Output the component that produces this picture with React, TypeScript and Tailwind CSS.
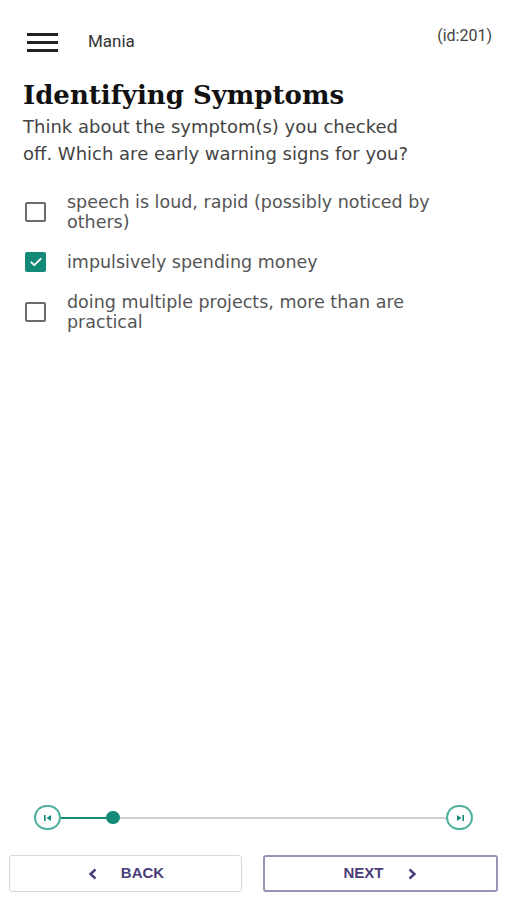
import React from "react";

const body = { fontFamily: '"DejaVu Sans", sans-serif' };

function Box({ checked }: { checked: boolean }) {
  if (checked) {
    return (
      <div className="w-[21px] h-[20px] rounded-[2px] bg-[#138a78] flex items-center justify-center shrink-0">
        <svg width="14" height="14" viewBox="0 0 24 24" fill="none" stroke="white" strokeWidth="3.2" strokeLinecap="round" strokeLinejoin="round">
          <path d="M4 12.5l5 5L20 6.5" />
        </svg>
      </div>
    );
  }
  return <div className="w-[21px] h-[20px] rounded-[2px] border-2 border-[#6b6b6b] shrink-0" />;
}

function Option({ checked, text }: { checked: boolean; text: string }) {
  return (
    <div className="flex items-center">
      <div className="w-[44px] pl-[2px] flex shrink-0">
        <Box checked={checked} />
      </div>
      <div className="text-[17.5px] leading-[20px] text-[#555] pr-[40px]" style={body}>
        {text}
      </div>
    </div>
  );
}

export default function App() {
  return (
    <div className="w-[507px] h-[900px] bg-white flex flex-col">
      <div className="flex items-start pl-[27px] pr-[15px] pt-[24px]">
        <div className="flex flex-col gap-[5px] pt-[9px]">
          <div className="w-[31px] h-[3px] bg-[#222]" />
          <div className="w-[31px] h-[3px] bg-[#222]" />
          <div className="w-[31px] h-[3px] bg-[#222]" />
        </div>
        <div className="ml-[30px] pt-[5px] text-[17px] text-[#333]" style={{ fontFamily: '"Roboto", sans-serif' }}>Mania</div>
        <div className="ml-auto text-[16px] text-[#444]" style={{ fontFamily: '"Roboto", sans-serif' }}>(id:201)</div>
      </div>
      <div className="px-[23px] pt-[24px]">
        <h1 className="text-[26px] leading-[32px] font-bold text-[#111]" style={{ fontFamily: '"DejaVu Serif", serif' }}>
          Identifying Symptoms
        </h1>
        <p className="mt-[2px] w-[400px] text-[18px] leading-[27px] text-[#444]" style={body}>
          Think about the symptom(s) you checked off. Which are early warning signs for you?
        </p>
        <div className="mt-[25px] flex flex-col gap-[20px]">
          <Option checked={false} text="speech is loud, rapid (possibly noticed by others)" />
          <Option checked={true} text="impulsively spending money" />
          <Option checked={false} text="doing multiple projects, more than are practical" />
        </div>
      </div>
      <div className="flex-1" />
      <div className="px-[34px] flex items-center">
        <div className="w-[27px] h-[25px] rounded-full border-2 border-[#4fb09c] flex items-center justify-center shrink-0">
          <svg width="10" height="8" viewBox="0 0 10 8"><rect x="1" y="1" width="1.6" height="6" fill="#138a78" /><path d="M8 1L3.5 4L8 7z" fill="#138a78" /></svg>
        </div>
        <div className="w-[47px] h-[2px] bg-[#138a78]" />
        <div className="w-[14px] h-[13px] rounded-full bg-[#138a78] -mx-[2px] relative z-10" />
        <div className="flex-1 h-[2px] bg-[#cfcfcf]" />
        <div className="w-[27px] h-[25px] rounded-full border-2 border-[#4fb09c] flex items-center justify-center shrink-0">
          <svg width="10" height="8" viewBox="0 0 10 8"><path d="M2 1L6.5 4L2 7z" fill="#138a78" /><rect x="7.4" y="1" width="1.6" height="6" fill="#138a78" /></svg>
        </div>
      </div>
      <div className="flex gap-[21px] px-[9px] pt-[25px] pb-[8px]" style={{ fontFamily: '"Liberation Sans", sans-serif' }}>
        <button className="flex-1 h-[37px] rounded-[3px] border border-[#d8d8d8] flex items-center justify-center text-[#4a3d7a] font-bold text-[15px]">
          <svg width="12" height="14" viewBox="0 0 12 14" className="mr-[22px]"><path d="M8.5 2.5L3.5 7l5 4.5" fill="none" stroke="#4a3d7a" strokeWidth="2.4" /></svg>
          BACK
        </button>
        <button className="flex-1 h-[37px] rounded-[3px] border-2 border-[#9a92b6] flex items-center justify-center text-[#4a3d7a] font-bold text-[15px]">
          NEXT
          <svg width="12" height="14" viewBox="0 0 12 14" className="ml-[22px]"><path d="M3.5 2.5L8.5 7l-5 4.5" fill="none" stroke="#4a3d7a" strokeWidth="2.4" /></svg>
        </button>
      </div>
    </div>
  );
}
